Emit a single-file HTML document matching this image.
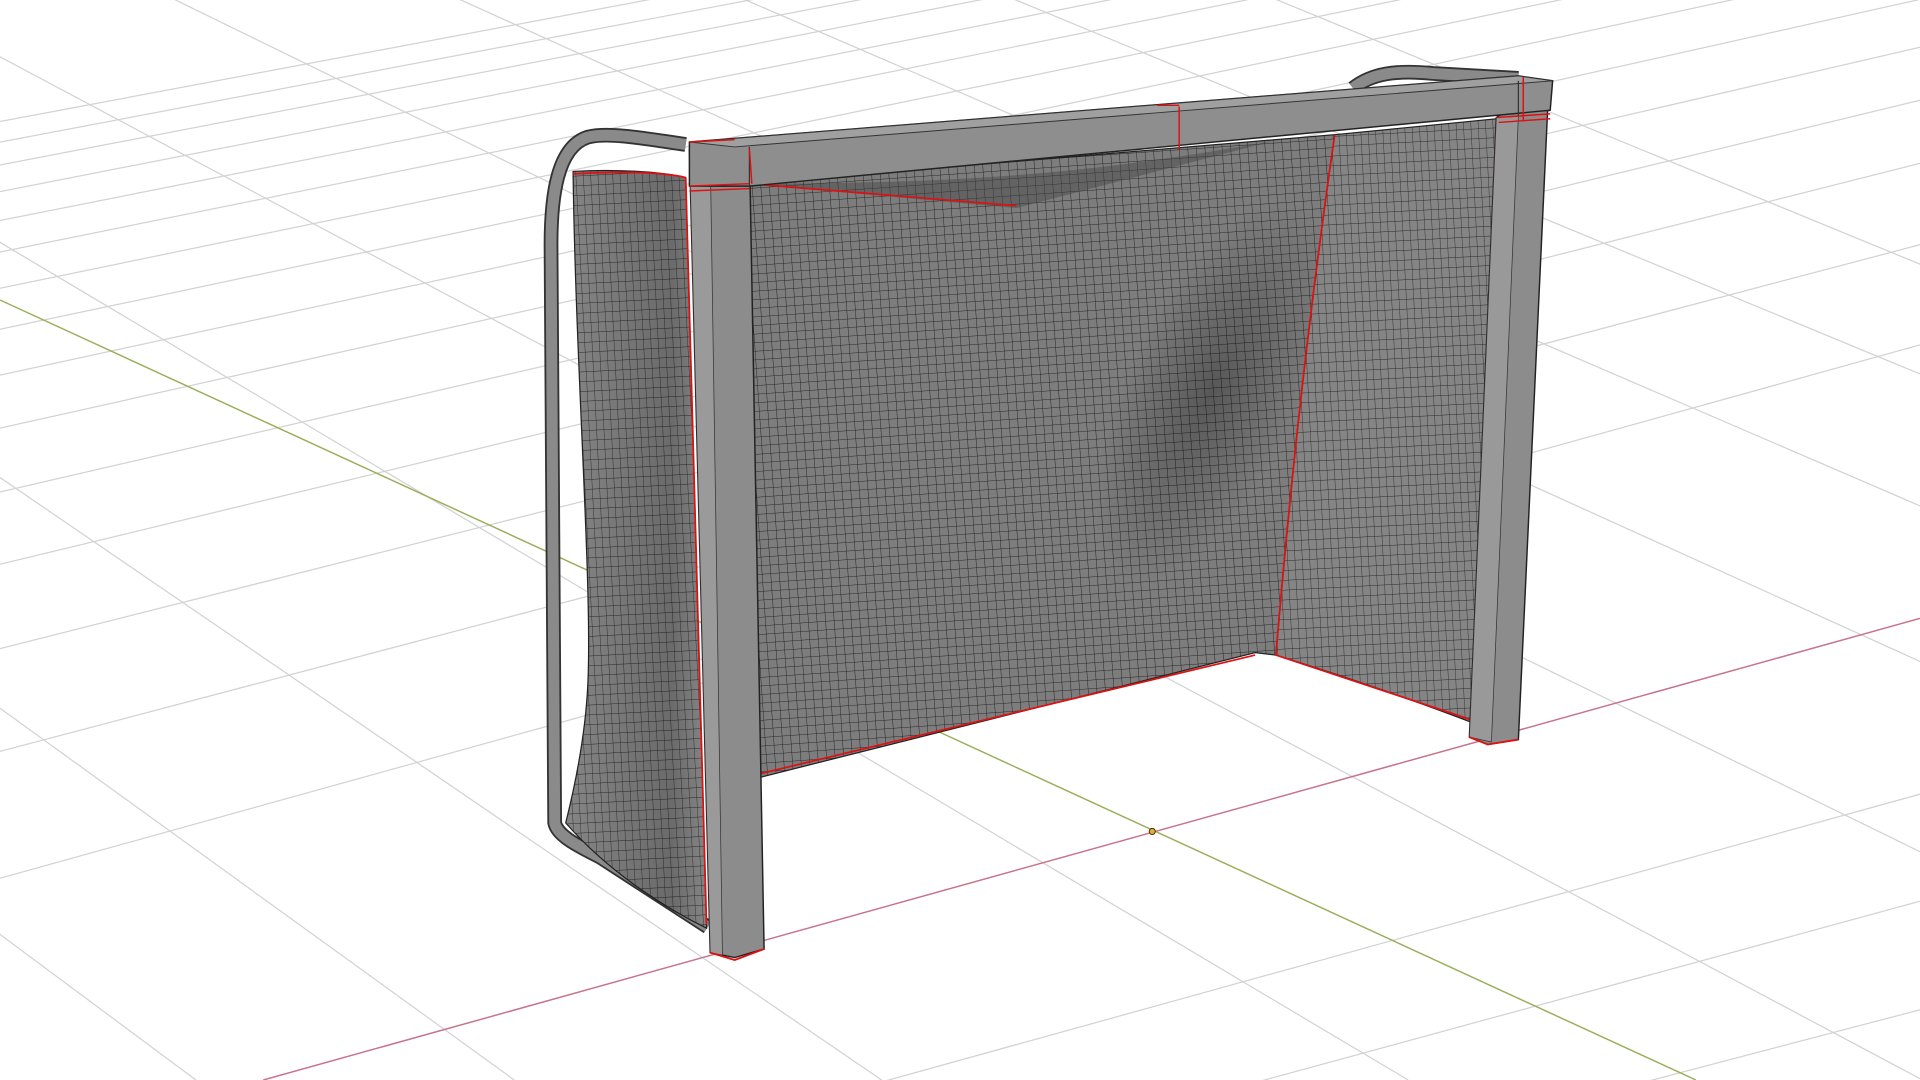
<!DOCTYPE html>
<html><head><meta charset="utf-8"><style>
html,body{margin:0;padding:0;background:#fff;width:1920px;height:1080px;overflow:hidden;position:relative}
svg{display:block;position:absolute;left:0;top:0;overflow:hidden}
</style></head><body>
<svg width="1920" height="1080" viewBox="0 0 1568 882" xmlns="http://www.w3.org/2000/svg">
<defs>
<pattern id="mesh" width="7" height="7" patternUnits="userSpaceOnUse" patternTransform="rotate(-4)">
<rect width="7" height="7" fill="#7d7d7d"/>
<path d="M0 0H7M0 0V7" stroke="#262626" stroke-width="0.8"/>
</pattern>
<pattern id="mesh2" width="6" height="8" patternUnits="userSpaceOnUse" patternTransform="rotate(-3)">
<rect width="6" height="8" fill="#858585"/>
<path d="M0 0H6M0 0V8" stroke="#2a2a2a" stroke-width="0.7"/>
</pattern>
<radialGradient id="blob" cx="0.5" cy="0.5" r="0.5">
<stop offset="0" stop-color="#000" stop-opacity="0.3"/>
<stop offset="1" stop-color="#000" stop-opacity="0"/>
</radialGradient>
<linearGradient id="shade" x1="0" y1="0" x2="1" y2="0">
<stop offset="0" stop-color="#000" stop-opacity="0"/>
<stop offset="0.75" stop-color="#000" stop-opacity="0.2"/>
<stop offset="1" stop-color="#000" stop-opacity="0"/>
</linearGradient>
</defs>
<rect width="1568" height="882" fill="#fff"/>
<g stroke="#d2d2d2" stroke-width="1" fill="none">
<path d="M-100 745 L1700 245"/>
<path d="M-100 640 L1700 165"/>
<path d="M-100 555 L1700 100"/>
<path d="M-100 485 L1700 50"/>
<path d="M-100 425 L1700 8"/>
<path d="M-100 372 L1700 -30"/>
<path d="M-100 328 L1700 -62"/>
<path d="M-100 290 L1700 -90"/>
<path d="M-100 256 L1700 -115"/>
<path d="M-100 226 L1700 -138"/>
<path d="M-100 200 L1700 -158"/>
<path d="M-100 176 L1700 -176"/>
<path d="M-100 154 L1700 -192"/>
<path d="M-100 135 L1700 -206"/>
<path d="M-100 118 L1700 -220"/>
<path d="M300 1000 L1700 612"/>
<path d="M600 1000 L1700 700"/>
<path d="M900 1000 L1700 790"/>
<path d="M-400 -40 L1150 882"/>
<path d="M-200 -60 L1570 882"/>
<path d="M0 -70 L1700 760"/>
<path d="M200 -80 L1700 600"/>
<path d="M400 -90 L1700 470"/>
<path d="M600 -95 L1700 360"/>
<path d="M800 -100 L1700 270"/>
<path d="M-600 -20 L720 882"/>
<path d="M-800 0 L420 882"/>
<path d="M-1000 20 L160 882"/>
<path d="M-1200 40 L-40 882"/>
</g>
<path d="M215 882 L1568 505" stroke="#c8738a" stroke-width="1.2"/>
<path d="M0 245 L1385 882" stroke="#9aae5a" stroke-width="1.2"/>
<circle cx="941" cy="679" r="2.5" fill="#e8b020" stroke="#333" stroke-width="0.8"/>

<path d="M560 118 C520 112 495 108 480 112 C455 120 450 160 450 200 L453 672 C455 682 470 690 490 700 L578 757" fill="none" stroke="#333" stroke-width="12"/>
<path d="M560 118 C520 112 495 108 480 112 C455 120 450 160 450 200 L453 672 C455 682 470 690 490 700 L578 757" fill="none" stroke="#8a8a8a" stroke-width="9"/>
<path d="M1105 72 C1120 60 1140 57 1170 60 L1240 64" fill="none" stroke="#333" stroke-width="12"/>
<path d="M1105 72 C1120 60 1140 57 1170 60 L1240 64" fill="none" stroke="#8a8a8a" stroke-width="9"/>

<path d="M468 140 C500 138 540 140 560 145 L577 758 C540 740 495 710 462 672 C470 640 478 600 480 560 C484 480 470 300 468 140Z" fill="url(#mesh2)" stroke="#222" stroke-width="1"/>
<path d="M468 140 C500 138 540 140 560 145 L577 758 C540 740 495 710 462 672 C470 640 478 600 480 560 C484 480 470 300 468 140Z" fill="url(#shade)"/>
<path d="M612 150 L1090 110 C1070 250 1055 380 1042 535 L1025 533 L620 635 Z" fill="url(#mesh)" stroke="#222" stroke-width="1"/>
<path d="M612 150 C800 150 900 140 1040 115 L830 170 Z" fill="#444" opacity="0.45"/>
<ellipse cx="990" cy="320" rx="70" ry="170" transform="rotate(25 990 320)" fill="url(#blob)"/>
<path d="M1090 110 L1222 97 L1202 590 C1150 570 1090 550 1042 535 C1055 380 1070 250 1090 110Z" fill="url(#mesh2)" stroke="#222" stroke-width="1"/>
<g stroke="#e01010" stroke-width="1.4" fill="none">
<path d="M1090 110 C1070 250 1055 380 1042 535"/>
<path d="M1042 535 L1202 588"/>
<path d="M1025 535 L620 632"/>
<path d="M560 145 L577 755"/>
<path d="M468 142 C500 140 540 140 560 145"/>
<path d="M1222 97 L1202 590"/>
<path d="M612 150 L830 168"/>
</g>

<path d="M563 122 L612 120 L624 775 L600 782 L580 778 Z" fill="#8c8c8c" stroke="#222" stroke-width="1.2"/>
<path d="M563 122 L580 124 L590 780 L580 778Z" fill="#9a9a9a" stroke="#333" stroke-width="0.6"/>
<path d="M580 778 L600 784 L624 775" stroke="#e01010" stroke-width="1.5" fill="none"/>
<path d="M1222 96 L1265 66 L1240 604 L1215 608 L1200 602 Z" fill="#8c8c8c" stroke="#222" stroke-width="1.2"/>
<path d="M1222 96 L1240 95 L1218 606 L1200 602Z" fill="#999" stroke="#333" stroke-width="0.6"/>
<path d="M1200 602 L1215 608 L1240 604" stroke="#e01010" stroke-width="1.5" fill="none"/>
<path d="M563 116 L1240 62 L1268 66 L1266 90 L612 152 L563 152 Z" fill="#8e8e8e" stroke="#222" stroke-width="1.2"/>
<path d="M563 116 L1240 62 L1268 66 L600 120 Z" fill="#a0a0a0" stroke="#333" stroke-width="0.8"/>
<path d="M612 120 L612 152 M1240 66 L1240 95" stroke="#333" stroke-width="1" fill="none"/>
<g stroke="#e01010" stroke-width="1.2" fill="none">
<path d="M563 152 L612 150"/>
<path d="M563 156 L612 154"/>
<path d="M612 121 L614 150"/>
<path d="M963 87 L963 122"/>
<path d="M945 86 L963 86"/>
<path d="M1244 63 L1244 98"/>
<path d="M1222 96 L1266 93"/>
<path d="M1224 100 L1266 97"/>
<path d="M563 116 L600 114"/>
</g>
</svg>
</body></html>
